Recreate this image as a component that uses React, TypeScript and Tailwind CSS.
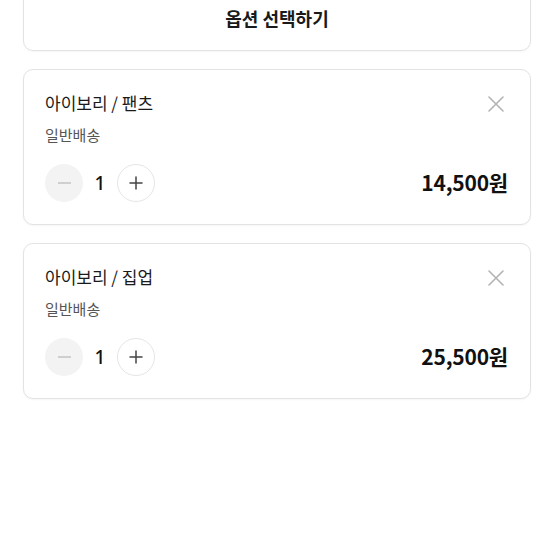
import React from "react";

const font = { fontFamily: '"Noto Sans CJK KR", "Noto Sans", sans-serif' };

function XIcon() {
  return (
    <svg width="16" height="16" viewBox="0 0 16 16" fill="none">
      <path d="M1 1L15 15M15 1L1 15" stroke="#b3b3b3" strokeWidth="1.6" strokeLinecap="round" />
    </svg>
  );
}

function Card({ title, price }: { title: string; price: string }) {
  return (
    <div className="border border-[#e3e3e3] rounded-[10px] bg-white px-[21px] pt-[21px] pb-[22px] shadow-[0_1px_2px_rgba(0,0,0,0.04)]">
      <div className="flex items-start justify-between">
        <div className="text-[17px] leading-[24px] text-[#1a1a1a]">{title}</div>
        <div className="pt-[5px] pr-[5px]">
          <XIcon />
        </div>
      </div>
      <div className="mt-[10px] text-[15px] leading-[20px] text-[#555]">일반배송</div>
      <div className="mt-[19px] flex items-center justify-between">
        <div className="flex items-center">
          <div className="w-[38px] h-[38px] rounded-full bg-[#f3f3f3] flex items-center justify-center">
            <div className="w-[13px] h-[1.5px] bg-[#cfcfcf]" />
          </div>
          <div className="w-[34px] text-center text-[19px] font-medium text-[#111]" style={{ fontFamily: '"Noto Sans", sans-serif' }}>1</div>
          <div className="w-[38px] h-[38px] rounded-full border border-[#e6e6e6] flex items-center justify-center">
            <svg width="14" height="14" viewBox="0 0 14 14">
              <path d="M7 1V13M1 7H13" stroke="#444" strokeWidth="1.5" strokeLinecap="round" />
            </svg>
          </div>
        </div>
        <div className="text-[21px] font-bold text-[#111] pr-[1px] tracking-[-0.2px]">{price}</div>
      </div>
    </div>
  );
}

export default function App() {
  return (
    <div className="w-[555px] h-[555px] bg-white overflow-hidden" style={font}>
      <div className="pl-[23px] pr-[24px] flex flex-col gap-[18px]">
        <div className="-mt-[15px] h-[66px] border border-[#e3e3e3] rounded-[10px] flex items-center justify-center text-[18px] font-bold text-[#1a1a1a] shadow-[0_1px_2px_rgba(0,0,0,0.04)]">
          옵션 선택하기
        </div>
        <Card title="아이보리 / 팬츠" price="14,500원" />
        <Card title="아이보리 / 집업" price="25,500원" />
      </div>
    </div>
  );
}
